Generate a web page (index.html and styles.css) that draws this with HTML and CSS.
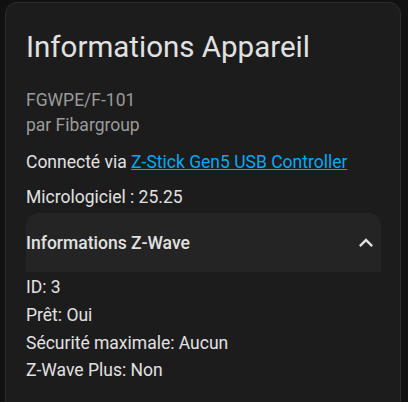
FILE: index.html
```html
<!DOCTYPE html>
<html lang="fr">
<head>
  <meta charset="UTF-8">
  <meta name="viewport" content="width=device-width, initial-scale=1.0">
  <title>Informations Appareil</title>
  <link rel="stylesheet" href="styles.css">
</head>
<body>
  <div class="card">
    <h1 class="card-title">Informations Appareil</h1>

    <!-- Model and manufacturer -->
    <div class="model">
      <div>FGWPE/F-101</div>
      <div>par Fibargroup</div>
    </div>

    <div class="line">Connecté via <a href="#">Z-Stick Gen5 USB Controller</a></div>
    <div class="line">Micrologiciel : 25.25</div>

    <!-- Z-Wave details panel -->
    <div class="panel">
      <div class="panel-header">
        <span>Informations Z-Wave</span>
        <svg class="chevron" viewBox="0 0 24 24"><path d="M7.41,15.41L12,10.83L16.59,15.41L18,14L12,8L6,14L7.41,15.41Z"/></svg>
      </div>
    </div>
    <div class="details">
      <div>ID: 3</div>
      <div>Prêt: Oui</div>
      <div>Sécurité maximale: Aucun</div>
      <div>Z-Wave Plus: Non</div>
    </div>
  </div>
</body>
</html>
```

FILE: styles.css
```css
body {
  margin: 0;
  padding: 2px 7px 0 5px;
  background-color: #111111;
  font-family: Roboto, "Noto Sans", sans-serif;
  font-size: 17.5px;
  color: #e1e1e1;
  overflow: hidden;
}
.card {
  background-color: #1c1c1c;
  border: 1px solid #2c2c2c;
  border-radius: 12px;
  padding: 0 19px 0 20px;
  min-height: 440px;
}
.card-title {
  margin: 0;
  padding-top: 25.5px;
  font-size: 29.5px;
  font-weight: 400;
  line-height: 37px;
  color: #e1e1e1;
}
.model {
  margin-top: 22px;
  line-height: 25px;
  color: #9b9b9b;
}
.line {
  margin-top: 7.5px;
  line-height: 27.6px;
}
.model + .line {
  margin-top: 11px;
}
.line a {
  color: #03a9f4;
  text-decoration: underline;
}
.panel {
  margin-top: 2px;
  background-color: #242424;
  border-radius: 12px 12px 0 0;
}
.panel-header {
  height: 59px;
  display: flex;
  align-items: center;
  justify-content: space-between;
  font-weight: 500;
}
.chevron {
  width: 28px;
  height: 28px;
  fill: #e1e1e1;
  margin-right: 1px;
}
.details {
  margin-top: 2px;
  line-height: 27.7px;
}
```
